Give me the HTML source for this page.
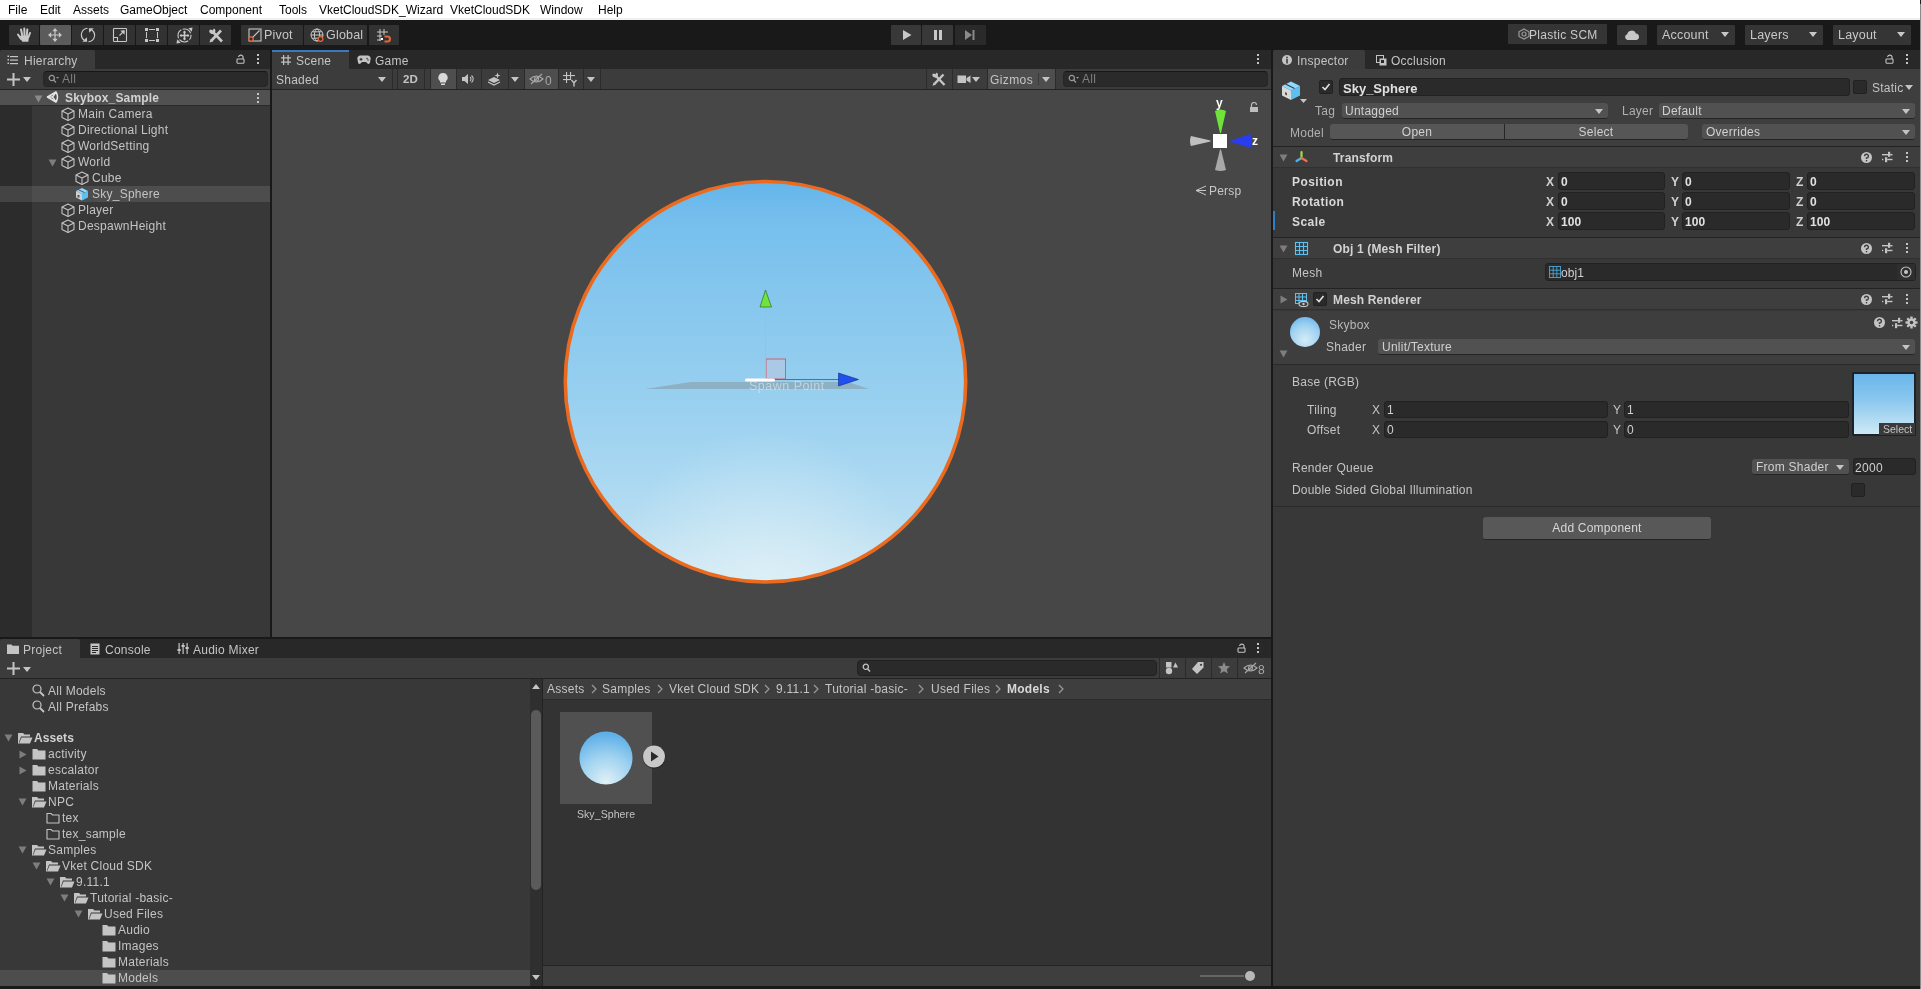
<!DOCTYPE html><html><head><meta charset="utf-8"><style>
html,body{margin:0;padding:0;}
body{width:1921px;height:989px;position:relative;overflow:hidden;background:#191919;font-family:"Liberation Sans",sans-serif;}
div{position:absolute;box-sizing:border-box;}
.t{white-space:nowrap;will-change:transform;}
</style></head><body>
<div style="left:0px;top:0px;width:1921px;height:18px;background:#ffffff;"></div>
<div style="left:0px;top:18px;width:1921px;height:2px;background:#f0f0f0;"></div>
<div class="t" style="left:8px;top:3.84px;font-size:12px;line-height:12px;color:#000;font-weight:normal;letter-spacing:0px;">File</div>
<div class="t" style="left:40px;top:3.84px;font-size:12px;line-height:12px;color:#000;font-weight:normal;letter-spacing:0px;">Edit</div>
<div class="t" style="left:73px;top:3.84px;font-size:12px;line-height:12px;color:#000;font-weight:normal;letter-spacing:0px;">Assets</div>
<div class="t" style="left:120px;top:3.84px;font-size:12px;line-height:12px;color:#000;font-weight:normal;letter-spacing:0px;">GameObject</div>
<div class="t" style="left:200px;top:3.84px;font-size:12px;line-height:12px;color:#000;font-weight:normal;letter-spacing:0px;">Component</div>
<div class="t" style="left:279px;top:3.84px;font-size:12px;line-height:12px;color:#000;font-weight:normal;letter-spacing:0px;">Tools</div>
<div class="t" style="left:319px;top:3.84px;font-size:12px;line-height:12px;color:#000;font-weight:normal;letter-spacing:0px;">VketCloudSDK_Wizard</div>
<div class="t" style="left:450px;top:3.84px;font-size:12px;line-height:12px;color:#000;font-weight:normal;letter-spacing:0px;">VketCloudSDK</div>
<div class="t" style="left:540px;top:3.84px;font-size:12px;line-height:12px;color:#000;font-weight:normal;letter-spacing:0px;">Window</div>
<div class="t" style="left:598px;top:3.84px;font-size:12px;line-height:12px;color:#000;font-weight:normal;letter-spacing:0px;">Help</div>
<div style="left:1920px;top:4px;width:1px;height:985px;background:#8a8a8a;"></div>
<div style="left:1920px;top:0px;width:1px;height:4px;background:#202020;"></div>
<div style="left:0px;top:20px;width:1920px;height:30px;background:#191919;"></div>
<div style="left:9px;top:25px;width:30px;height:20px;background:#323232;border-radius:1px;"></div>
<div style="left:40px;top:25px;width:31px;height:20px;background:#5b5b5b;border-radius:1px;"></div>
<div style="left:72px;top:25px;width:31px;height:20px;background:#323232;border-radius:1px;"></div>
<div style="left:104px;top:25px;width:31px;height:20px;background:#323232;border-radius:1px;"></div>
<div style="left:136px;top:25px;width:31px;height:20px;background:#323232;border-radius:1px;"></div>
<div style="left:168px;top:25px;width:31px;height:20px;background:#323232;border-radius:1px;"></div>
<div style="left:200px;top:25px;width:31px;height:20px;background:#323232;border-radius:1px;"></div>
<svg style="position:absolute;left:16px;top:27px;" width="16" height="16" viewBox="0 0 16 16"><g stroke="#c8c8c8" stroke-width="2" stroke-linecap="round" fill="none"><path d="M2 7.5 L5 12"/><path d="M5 2.5 L6.3 8.5"/><path d="M8.3 1.5 L8.5 8.5"/><path d="M11.3 2.5 L10.8 8.5"/><path d="M14 6 L12.5 10"/></g><path d="M4.5 8.5 H13.2 L12.3 14.8 H6.3 L3.8 10.5Z" fill="#c8c8c8"/></svg>
<svg style="position:absolute;left:47px;top:27px;" width="16" height="16" viewBox="0 0 16 16"><g stroke="#c8c8c8" stroke-width="1.2" fill="none"><path d="M8 3 V13 M3 8 H13"/></g><g fill="#c8c8c8"><path d="M8 1 L5.3 4.2 H10.7Z M8 15 L5.3 11.8 H10.7Z M1 8 L4.2 5.3 V10.7Z M15 8 L11.8 5.3 V10.7Z"/></g></svg>
<svg style="position:absolute;left:80px;top:27px;" width="16" height="16" viewBox="0 0 16 16"><g stroke="#c8c8c8" stroke-width="1.1" fill="none"><path d="M7.5 1.3 A6.5 6.5 0 0 0 4.5 13.3"/><path d="M8.5 14.7 A6.5 6.5 0 0 0 11.5 2.7"/></g><g fill="#c8c8c8"><path d="M2.3 14.8 L7.2 14.8 L6.8 10.2Z"/><path d="M13.7 1.2 L8.8 1.2 L9.2 5.8Z"/></g></svg>
<svg style="position:absolute;left:112px;top:27px;" width="16" height="16" viewBox="0 0 16 16"><g stroke="#c8c8c8" stroke-width="1.1" fill="none"><rect x="1.5" y="1.5" width="13" height="13" rx="0.8"/><path d="M1.5 10.5 H5.5 V14.5"/><path d="M7.5 8.5 L12 4"/></g><path d="M12.8 3.2 L8.3 3.5 L12.5 7.7Z" fill="#c8c8c8"/></svg>
<svg style="position:absolute;left:144px;top:27px;" width="16" height="16" viewBox="0 0 16 16"><g fill="#c8c8c8"><rect x="1" y="1" width="3" height="3"/><rect x="12" y="1" width="3" height="3"/><rect x="1" y="12" width="3" height="3"/><rect x="12" y="12" width="3" height="3"/><rect x="5" y="2" width="6" height="1"/><rect x="5" y="13" width="6" height="1"/><rect x="2" y="5" width="1" height="6"/><rect x="13" y="5" width="1" height="6"/></g></svg>
<svg style="position:absolute;left:176px;top:27px;" width="17" height="17" viewBox="0 0 17 17"><g stroke="#c8c8c8" stroke-width="1.1" fill="none" stroke-dasharray="9.5 1.5" stroke-dashoffset="5"><circle cx="8.5" cy="8.5" r="6.5"/></g><g stroke="#c8c8c8" stroke-width="1.6"><path d="M8.5 4.5 V12.5 M4.5 8.5 H12.5"/></g><g fill="#c8c8c8"><path d="M8.5 3.5 L6.8 5.5 H10.2Z M8.5 13.5 L6.8 11.5 H10.2Z M3.5 8.5 L5.5 6.8 V10.2Z M13.5 8.5 L11.5 6.8 V10.2Z M16.5 0.5 L12.3 1.2 L15.8 4.7Z M0.5 16.5 L4.7 15.8 L1.2 12.3Z"/></g></svg>
<svg style="position:absolute;left:208px;top:27px;" width="17" height="17" viewBox="0 0 17 17"><g stroke="#c8c8c8" stroke-width="2.6" fill="none"><path d="M5 5 L14 14.5"/><path d="M3.5 13.5 L13 3.5"/></g><path d="M1.5 15.5 L2.5 12 L5 14.5Z" fill="#c8c8c8"/><path d="M1.5 3 A3 3 0 1 0 6 1.5 L4.5 3.5 L3 2.5Z" fill="#c8c8c8"/></svg>
<div style="left:241px;top:25px;width:62px;height:20px;background:#323232;border-radius:1px;"></div>
<div style="left:304px;top:25px;width:63px;height:20px;background:#323232;border-radius:1px;"></div>
<div style="left:369px;top:25px;width:30px;height:20px;background:#323232;border-radius:1px;"></div>
<svg style="position:absolute;left:248px;top:28px;" width="14" height="14" viewBox="0 0 14 14"><rect x="1" y="1" width="12" height="12" fill="none" stroke="#c8c8c8" stroke-width="1.1"/><path d="M3.5 10.5 L11.5 2.5" stroke="#c8c8c8" stroke-width="1.1"/><circle cx="3" cy="11" r="2.2" fill="#303030" stroke="#e8673a" stroke-width="1.3"/></svg>
<div class="t" style="left:264px;top:29.42px;font-size:12.5px;line-height:12.5px;color:#c8c8c8;font-weight:normal;letter-spacing:0.2px;">Pivot</div>
<svg style="position:absolute;left:310px;top:28px;" width="14" height="14" viewBox="0 0 14 14"><g fill="none" stroke="#c8c8c8" stroke-width="1"><circle cx="7" cy="7" r="6"/><ellipse cx="7" cy="7" rx="2.6" ry="6"/><path d="M1 7 H13 M2 3.8 H12 M2 10.2 H12"/></g><circle cx="10.5" cy="11" r="2.4" fill="#303030" stroke="#e8673a" stroke-width="1.3"/></svg>
<div class="t" style="left:326px;top:29.42px;font-size:12.5px;line-height:12.5px;color:#c8c8c8;font-weight:normal;letter-spacing:0.2px;">Global</div>
<svg style="position:absolute;left:376px;top:28px;" width="16" height="16" viewBox="0 0 16 16"><g stroke="#c8c8c8" stroke-width="1"><path d="M4 1 V13 M8 1 V7 M1 4 H12 M1 8 H6 M1 12 H5"/></g><rect x="5" y="10" width="2" height="2" fill="#fff"/><path d="M8.5 8.5 H11.5 A2.5 2.5 0 0 1 11.5 13.5 H8.5" fill="none" stroke="#e8673a" stroke-width="2"/></svg>
<div style="left:891px;top:25px;width:30px;height:20px;background:#383838;border-radius:1px;"></div>
<div style="left:922px;top:25px;width:31px;height:20px;background:#383838;border-radius:1px;"></div>
<div style="left:955px;top:25px;width:31px;height:20px;background:#2a2a2a;border-radius:1px;"></div>
<svg style="position:absolute;left:901px;top:29px;" width="12" height="12" viewBox="0 0 12 12"><path d="M2 1 L10.5 6 L2 11Z" fill="#c8c8c8"/></svg>
<svg style="position:absolute;left:932px;top:29px;" width="12" height="12" viewBox="0 0 12 12"><rect x="2" y="1" width="3" height="10" fill="#c8c8c8"/><rect x="7" y="1" width="3" height="10" fill="#c8c8c8"/></svg>
<svg style="position:absolute;left:964px;top:29px;" width="12" height="12" viewBox="0 0 12 12"><path d="M1 1 L8 6 L1 11Z" fill="#8a8a8a"/><rect x="8.5" y="1" width="2" height="10" fill="#8a8a8a"/></svg>
<div style="left:1508px;top:24px;width:99px;height:20px;background:#353535;border-radius:1px;"></div>
<svg style="position:absolute;left:1518px;top:28px;" width="12" height="12" viewBox="0 0 12 12"><g fill="none" stroke="#9a9a9a" stroke-width="1.2"><path d="M6 1 L11 3.8 V8.5 L6 11 L1 8.5 V3.8Z"/><circle cx="6" cy="6" r="2"/></g></svg>
<div class="t" style="left:1529px;top:28.84px;font-size:12px;line-height:12px;color:#c8c8c8;font-weight:normal;letter-spacing:0.3px;">Plastic SCM</div>
<div style="left:1617px;top:25px;width:30px;height:20px;background:#353535;border-radius:1px;"></div>
<svg style="position:absolute;left:1624px;top:29px;" width="16" height="12" viewBox="0 0 16 12"><path d="M3.5 11 A3 3 0 0 1 3.2 5.2 A4.5 4.5 0 0 1 11.8 4.5 A3.3 3.3 0 0 1 12.5 11Z" fill="#c8c8c8"/></svg>
<div style="left:1657px;top:25px;width:78px;height:20px;background:#353535;border-radius:1px;"></div>
<div class="t" style="left:1662px;top:29.42px;font-size:12.5px;line-height:12.5px;color:#c8c8c8;font-weight:normal;letter-spacing:0.2px;">Account</div>
<svg style="position:absolute;left:1721px;top:32px;" width="9" height="6" viewBox="0 0 9 6"><path d="M0 0 H8 L4 5Z" fill="#c8c8c8"/></svg>
<div style="left:1745px;top:25px;width:78px;height:20px;background:#353535;border-radius:1px;"></div>
<div class="t" style="left:1750px;top:29.42px;font-size:12.5px;line-height:12.5px;color:#c8c8c8;font-weight:normal;letter-spacing:0.2px;">Layers</div>
<svg style="position:absolute;left:1809px;top:32px;" width="9" height="6" viewBox="0 0 9 6"><path d="M0 0 H8 L4 5Z" fill="#c8c8c8"/></svg>
<div style="left:1833px;top:25px;width:78px;height:20px;background:#353535;border-radius:1px;"></div>
<div class="t" style="left:1838px;top:29.42px;font-size:12.5px;line-height:12.5px;color:#c8c8c8;font-weight:normal;letter-spacing:0.2px;">Layout</div>
<svg style="position:absolute;left:1897px;top:32px;" width="9" height="6" viewBox="0 0 9 6"><path d="M0 0 H8 L4 5Z" fill="#c8c8c8"/></svg>
<div style="left:0px;top:50px;width:270px;height:19px;background:#282828;"></div>
<div style="left:0px;top:50px;width:95px;height:19px;background:#3c3c3c;border-radius:2px 2px 0 0;"></div>
<svg style="position:absolute;left:7px;top:55px;" width="12" height="10" viewBox="0 0 12 10"><g fill="#c4c4c4"><rect x="3" y="1" width="8" height="1.2"/><rect x="3" y="4.5" width="8" height="1.2"/><rect x="3" y="8" width="8" height="1.2"/><rect x="0.5" y="0.5" width="1.5" height="1.5"/><rect x="0.5" y="4" width="1.5" height="1.5"/><rect x="0.5" y="7.5" width="1.5" height="1.5"/></g></svg>
<div class="t" style="left:23.5px;top:54.84px;font-size:12px;line-height:12px;color:#c4c4c4;font-weight:normal;letter-spacing:0.25px;">Hierarchy</div>
<svg style="position:absolute;left:235px;top:52px;" width="11" height="12" viewBox="0 0 11 12"><g fill="none" stroke="#c4c4c4" stroke-width="1.1"><rect x="2" y="7" width="7" height="4.2" rx="0.6"/><path d="M3.5 5 A2.4 2.4 0 0 1 8 4.5 V7"/></g></svg>
<svg style="position:absolute;left:256px;top:54px;" width="4" height="11" viewBox="0 0 4 11"><g fill="#c4c4c4"><rect x="1" y="0" width="2" height="2"/><rect x="1" y="4" width="2" height="2"/><rect x="1" y="8" width="2" height="2"/></g></svg>
<div style="left:0px;top:69px;width:270px;height:20px;background:#3c3c3c;"></div>
<svg style="position:absolute;left:7px;top:73px;" width="13" height="13" viewBox="0 0 13 13"><g fill="#c4c4c4"><rect x="5.5" y="0" width="2" height="13"/><rect x="0" y="5.5" width="13" height="2"/></g></svg>
<svg style="position:absolute;left:23px;top:77px;" width="8" height="5" viewBox="0 0 8 5"><path d="M0 0 H8 L4.0 5Z" fill="#c4c4c4"/></svg>
<div style="left:43px;top:71px;width:225px;height:16px;background:#2a2a2a;border-radius:4px;border:1px solid #262626;border-top-color:#171717;"></div>
<svg style="position:absolute;left:48px;top:74px;" width="12" height="10" viewBox="0 0 12 10"><g fill="none" stroke="#9a9a9a" stroke-width="1.2"><circle cx="3.8" cy="4" r="2.6"/><path d="M5.6 6 L8 8.5"/></g><path d="M8 3 H11 L9.5 4.8Z" fill="#9a9a9a"/></svg>
<div class="t" style="left:62px;top:72.84px;font-size:12px;line-height:12px;color:#7f7f7f;font-weight:normal;letter-spacing:0.25px;">All</div>
<div style="left:0px;top:89px;width:270px;height:1px;background:#232323;"></div>
<div style="left:0px;top:90px;width:270px;height:547px;background:#383838;"></div>
<div style="left:0px;top:106px;width:32px;height:531px;background:#2c2c2c;"></div>
<div style="left:0px;top:90px;width:270px;height:15px;background:#515151;"></div>
<div style="left:0px;top:105px;width:270px;height:1px;background:#2a2a2a;"></div>
<svg style="position:absolute;left:34px;top:95px;" width="9" height="8" viewBox="0 0 9 8"><path d="M0.5 0.5 H8.5 L4.5 7.5Z" fill="#8a8a8a"/></svg>
<svg style="position:absolute;left:46px;top:90px;" width="14" height="14" viewBox="0 0 14 14"><g fill="none" stroke="#e8e8e8" stroke-width="1.5" stroke-linejoin="round"><path d="M1.5 7 L10 2 Q13 7 10 12 Z"/><path d="M1.5 7 H6.5 L10 2 M6.5 7 L10 12"/></g></svg>
<div class="t" style="left:65px;top:91.84px;font-size:12px;line-height:12px;color:#d2d2d2;font-weight:bold;letter-spacing:0.15px;">Skybox_Sample</div>
<svg style="position:absolute;left:256px;top:93px;" width="4" height="11" viewBox="0 0 4 11"><g fill="#c4c4c4"><rect x="1" y="0" width="2" height="2"/><rect x="1" y="4" width="2" height="2"/><rect x="1" y="8" width="2" height="2"/></g></svg>
<div style="left:0px;top:186px;width:32px;height:16px;background:#444444;"></div>
<div style="left:32px;top:186px;width:238px;height:16px;background:#4d4d4d;"></div>
<svg style="position:absolute;left:61px;top:107px;" width="14" height="14" viewBox="0 0 14 14"><g fill="none" stroke="#c4c4c4" stroke-width="1.1" stroke-linejoin="round"><path d="M7 1 L13 4 V10.5 L7 13.5 L1 10.5 V4Z"/><path d="M1 4 L7 7 L13 4 M7 7 V13.5"/></g></svg>
<div class="t" style="left:78px;top:107.59px;font-size:12px;line-height:12px;color:#c4c4c4;font-weight:normal;letter-spacing:0.25px;">Main Camera</div>
<svg style="position:absolute;left:61px;top:123px;" width="14" height="14" viewBox="0 0 14 14"><g fill="none" stroke="#c4c4c4" stroke-width="1.1" stroke-linejoin="round"><path d="M7 1 L13 4 V10.5 L7 13.5 L1 10.5 V4Z"/><path d="M1 4 L7 7 L13 4 M7 7 V13.5"/></g></svg>
<div class="t" style="left:78px;top:123.59px;font-size:12px;line-height:12px;color:#c4c4c4;font-weight:normal;letter-spacing:0.25px;">Directional Light</div>
<svg style="position:absolute;left:61px;top:139px;" width="14" height="14" viewBox="0 0 14 14"><g fill="none" stroke="#c4c4c4" stroke-width="1.1" stroke-linejoin="round"><path d="M7 1 L13 4 V10.5 L7 13.5 L1 10.5 V4Z"/><path d="M1 4 L7 7 L13 4 M7 7 V13.5"/></g></svg>
<div class="t" style="left:78px;top:139.59px;font-size:12px;line-height:12px;color:#c4c4c4;font-weight:normal;letter-spacing:0.25px;">WorldSetting</div>
<svg style="position:absolute;left:48px;top:159px;" width="9" height="8" viewBox="0 0 9 8"><path d="M0.5 0.5 H8.5 L4.5 7.5Z" fill="#7d7d7d"/></svg>
<svg style="position:absolute;left:61px;top:155px;" width="14" height="14" viewBox="0 0 14 14"><g fill="none" stroke="#c4c4c4" stroke-width="1.1" stroke-linejoin="round"><path d="M7 1 L13 4 V10.5 L7 13.5 L1 10.5 V4Z"/><path d="M1 4 L7 7 L13 4 M7 7 V13.5"/></g></svg>
<div class="t" style="left:78px;top:155.59px;font-size:12px;line-height:12px;color:#c4c4c4;font-weight:normal;letter-spacing:0.25px;">World</div>
<svg style="position:absolute;left:75px;top:171px;" width="14" height="14" viewBox="0 0 14 14"><g fill="none" stroke="#c4c4c4" stroke-width="1.1" stroke-linejoin="round"><path d="M7 1 L13 4 V10.5 L7 13.5 L1 10.5 V4Z"/><path d="M1 4 L7 7 L13 4 M7 7 V13.5"/></g></svg>
<div class="t" style="left:92px;top:171.59px;font-size:12px;line-height:12px;color:#c4c4c4;font-weight:normal;letter-spacing:0.25px;">Cube</div>
<svg style="position:absolute;left:75px;top:187px;" width="14" height="14" viewBox="0 0 14 14"><path d="M1 4 L7 7 V13.5 L1 10.5Z" fill="#d0d0d0"/><path d="M7 7 L13 4 V10.5 L7 13.5Z" fill="#5cc0f0"/><path d="M1 4 L7 1 L13 4 L7 7Z" fill="#8fd8ff"/><path d="M3.5 2.8 L9.5 5.6" stroke="#3a3a3a" stroke-width="0.8"/><rect x="2.5" y="8" width="2" height="2.5" fill="#555"/></svg>
<div class="t" style="left:92px;top:187.59px;font-size:12px;line-height:12px;color:#c4c4c4;font-weight:normal;letter-spacing:0.25px;">Sky_Sphere</div>
<svg style="position:absolute;left:61px;top:203px;" width="14" height="14" viewBox="0 0 14 14"><g fill="none" stroke="#c4c4c4" stroke-width="1.1" stroke-linejoin="round"><path d="M7 1 L13 4 V10.5 L7 13.5 L1 10.5 V4Z"/><path d="M1 4 L7 7 L13 4 M7 7 V13.5"/></g></svg>
<div class="t" style="left:78px;top:203.59px;font-size:12px;line-height:12px;color:#c4c4c4;font-weight:normal;letter-spacing:0.25px;">Player</div>
<svg style="position:absolute;left:61px;top:219px;" width="14" height="14" viewBox="0 0 14 14"><g fill="none" stroke="#c4c4c4" stroke-width="1.1" stroke-linejoin="round"><path d="M7 1 L13 4 V10.5 L7 13.5 L1 10.5 V4Z"/><path d="M1 4 L7 7 L13 4 M7 7 V13.5"/></g></svg>
<div class="t" style="left:78px;top:219.59px;font-size:12px;line-height:12px;color:#c4c4c4;font-weight:normal;letter-spacing:0.25px;">DespawnHeight</div>
<div style="left:272px;top:50px;width:999px;height:19px;background:#282828;"></div>
<div style="left:272px;top:50px;width:77px;height:19px;background:#3c3c3c;border-radius:2px 2px 0 0;"></div>
<div style="left:272px;top:50px;width:77px;height:2px;background:#3a79bb;"></div>
<svg style="position:absolute;left:281px;top:55px;" width="10" height="10" viewBox="0 0 10 10"><g fill="#c4c4c4"><rect x="2" y="0" width="1.2" height="10"/><rect x="6.5" y="0" width="1.2" height="10"/><rect x="0" y="2.3" width="10" height="1.2"/><rect x="0" y="6.5" width="10" height="1.2"/></g></svg>
<div class="t" style="left:296px;top:54.84px;font-size:12px;line-height:12px;color:#c4c4c4;font-weight:normal;letter-spacing:0.25px;">Scene</div>
<svg style="position:absolute;left:357px;top:55px;" width="14" height="9" viewBox="0 0 14 9"><path d="M3 0.5 H11 A3 3 0 0 1 13.5 4.5 L13 7.5 A1.5 1.5 0 0 1 10.5 8.5 L9 7 H5 L3.5 8.5 A1.5 1.5 0 0 1 1 7.5 L0.5 4.5 A3 3 0 0 1 3 0.5Z" fill="#c4c4c4"/><g fill="#282828"><rect x="2.5" y="3.8" width="3" height="1"/><rect x="3.5" y="2.8" width="1" height="3"/><circle cx="10" cy="3.5" r="0.7"/><circle cx="11" cy="5" r="0.7"/></g></svg>
<div class="t" style="left:375px;top:54.84px;font-size:12px;line-height:12px;color:#c4c4c4;font-weight:normal;letter-spacing:0.25px;">Game</div>
<svg style="position:absolute;left:1256px;top:54px;" width="4" height="11" viewBox="0 0 4 11"><g fill="#c4c4c4"><rect x="1" y="0" width="2" height="2"/><rect x="1" y="4" width="2" height="2"/><rect x="1" y="8" width="2" height="2"/></g></svg>
<div style="left:272px;top:69px;width:999px;height:20px;background:#3c3c3c;"></div>
<div class="t" style="left:276px;top:73.84px;font-size:12px;line-height:12px;color:#c4c4c4;font-weight:normal;letter-spacing:0.25px;">Shaded</div>
<svg style="position:absolute;left:378px;top:77px;" width="8" height="5" viewBox="0 0 8 5"><path d="M0 0 H8 L4.0 5Z" fill="#c4c4c4"/></svg>
<div style="left:392px;top:69px;width:1px;height:20px;background:#2b2b2b;"></div>
<div style="left:397px;top:69px;width:1px;height:20px;background:#2b2b2b;"></div>
<div class="t" style="left:403px;top:74.27px;font-size:11.5px;line-height:11.5px;color:#c4c4c4;font-weight:bold;letter-spacing:0px;">2D</div>
<div style="left:424px;top:69px;width:1px;height:20px;background:#2b2b2b;"></div>
<div style="left:430px;top:69px;width:1px;height:20px;background:#2b2b2b;"></div>
<div style="left:431px;top:69px;width:25px;height:20px;background:#4e4e4e;"></div>
<svg style="position:absolute;left:437px;top:72px;" width="12" height="14" viewBox="0 0 12 14"><path d="M6 1 A4.5 4.5 0 0 1 9 9 V10.5 H3 V9 A4.5 4.5 0 0 1 6 1Z" fill="#d8d8d8"/><rect x="4" y="11.5" width="4" height="1.5" fill="#d8d8d8"/></svg>
<div style="left:456px;top:69px;width:1px;height:20px;background:#2b2b2b;"></div>
<svg style="position:absolute;left:461px;top:73px;" width="14" height="12" viewBox="0 0 14 12"><path d="M1 4 H3.5 L7 1 V11 L3.5 8 H1Z" fill="#c4c4c4"/><path d="M9 4 A2.5 2.5 0 0 1 9 8 M10.5 2.5 A4.5 4.5 0 0 1 10.5 9.5" fill="none" stroke="#c4c4c4" stroke-width="1.1"/></svg>
<div style="left:481px;top:69px;width:1px;height:20px;background:#2b2b2b;"></div>
<svg style="position:absolute;left:487px;top:72px;" width="14" height="14" viewBox="0 0 14 14"><path d="M1 8 L7 5 L13 8 L7 11Z" fill="#c4c4c4"/><path d="M1 10 L7 13 L13 10" fill="none" stroke="#c4c4c4" stroke-width="1.2"/><path d="M10.5 0.5 L11.3 2.7 L13.5 3.5 L11.3 4.3 L10.5 6.5 L9.7 4.3 L7.5 3.5 L9.7 2.7Z" fill="#c4c4c4"/></svg>
<div style="left:508px;top:69px;width:1px;height:20px;background:#2b2b2b;"></div>
<svg style="position:absolute;left:511px;top:77px;" width="8" height="5" viewBox="0 0 8 5"><path d="M0 0 H8 L4.0 5Z" fill="#c4c4c4"/></svg>
<div style="left:524px;top:69px;width:1px;height:20px;background:#2b2b2b;"></div>
<div style="left:525px;top:69px;width:33px;height:20px;background:#4e4e4e;"></div>
<svg style="position:absolute;left:529px;top:73px;" width="15" height="12" viewBox="0 0 15 12"><g fill="none" stroke="#a8a8a8" stroke-width="1.1"><path d="M1 6 Q7.5 0 14 6 Q7.5 12 1 6Z"/><circle cx="7.5" cy="6" r="2"/><path d="M2 11 L13 1"/></g></svg>
<div class="t" style="left:545px;top:74.84px;font-size:12px;line-height:12px;color:#a8a8a8;font-weight:normal;letter-spacing:0.25px;">0</div>
<div style="left:558px;top:69px;width:1px;height:20px;background:#2b2b2b;"></div>
<svg style="position:absolute;left:563px;top:72px;" width="16" height="15" viewBox="0 0 16 15"><g fill="#c4c4c4"><rect x="3" y="0" width="1.1" height="11"/><rect x="7" y="0" width="1.1" height="8"/><rect x="0" y="3" width="12" height="1.1"/><rect x="0" y="7" width="7" height="1.1"/></g><path d="M8.5 8 L11 11 L13.5 8 M11 11 V14.5" fill="none" stroke="#c4c4c4" stroke-width="1.4"/></svg>
<div style="left:583px;top:69px;width:1px;height:20px;background:#2b2b2b;"></div>
<svg style="position:absolute;left:587px;top:77px;" width="8" height="5" viewBox="0 0 8 5"><path d="M0 0 H8 L4.0 5Z" fill="#c4c4c4"/></svg>
<div style="left:600px;top:69px;width:1px;height:20px;background:#2b2b2b;"></div>
<div style="left:926px;top:69px;width:1px;height:20px;background:#2b2b2b;"></div>
<svg style="position:absolute;left:931px;top:71px;" width="16" height="16" viewBox="0 0 16 16"><g stroke="#c4c4c4" stroke-width="2.4" fill="none"><path d="M5 5 L13.5 14"/><path d="M3.5 12.8 L12.5 3.5"/></g><path d="M1.5 14.8 L2.5 11.5 L4.8 13.8Z" fill="#c4c4c4"/><path d="M1.5 3 A2.8 2.8 0 1 0 5.8 1.5 L4.3 3.3 L3 2.4Z" fill="#c4c4c4"/></svg>
<div style="left:952px;top:69px;width:1px;height:20px;background:#2b2b2b;"></div>
<svg style="position:absolute;left:957px;top:74px;" width="14" height="10" viewBox="0 0 14 10"><rect x="0.5" y="1.5" width="8.5" height="7.5" fill="#c4c4c4"/><path d="M9.5 4 L13.5 1.5 V9 L9.5 6.5Z" fill="#c4c4c4"/></svg>
<svg style="position:absolute;left:972px;top:77px;" width="8" height="5" viewBox="0 0 8 5"><path d="M0 0 H8 L4.0 5Z" fill="#c4c4c4"/></svg>
<div style="left:987px;top:69px;width:1px;height:20px;background:#2b2b2b;"></div>
<div style="left:988px;top:69px;width:67px;height:20px;background:#4e4e4e;"></div>
<div class="t" style="left:990px;top:73.84px;font-size:12px;line-height:12px;color:#c4c4c4;font-weight:normal;letter-spacing:0.4px;">Gizmos</div>
<div style="left:1038px;top:73px;width:1px;height:12px;background:#3a3a3a;"></div>
<svg style="position:absolute;left:1042px;top:77px;" width="8" height="5" viewBox="0 0 8 5"><path d="M0 0 H8 L4.0 5Z" fill="#c4c4c4"/></svg>
<div style="left:1055px;top:69px;width:1px;height:20px;background:#2b2b2b;"></div>
<div style="left:1063px;top:71px;width:205px;height:16px;background:#2a2a2a;border-radius:4px;border:1px solid #262626;border-top-color:#171717;"></div>
<svg style="position:absolute;left:1068px;top:74px;" width="12" height="10" viewBox="0 0 12 10"><g fill="none" stroke="#9a9a9a" stroke-width="1.2"><circle cx="3.8" cy="4" r="2.6"/><path d="M5.6 6 L8 8.5"/></g><path d="M8 3 H11 L9.5 4.8Z" fill="#9a9a9a"/></svg>
<div class="t" style="left:1082px;top:72.84px;font-size:12px;line-height:12px;color:#7f7f7f;font-weight:normal;letter-spacing:0.25px;">All</div>
<div style="left:272px;top:89px;width:999px;height:1px;background:#232323;"></div>
<div style="left:272px;top:90px;width:999px;height:547px;background:#474747;"></div>
<svg style="position:absolute;left:0;top:0" width="1921" height="989" viewBox="0 0 1921 989">
<defs>
<linearGradient id="sky" x1="0" y1="0" x2="0" y2="1">
<stop offset="0" stop-color="#64b5eb"/>
<stop offset="0.1" stop-color="#76bfed"/>
<stop offset="0.3" stop-color="#87c7ee"/>
<stop offset="0.5" stop-color="#95ceef"/>
<stop offset="0.7" stop-color="#a6d6f1"/>
<stop offset="0.85" stop-color="#b6ddf1"/>
<stop offset="1" stop-color="#cfe8f3"/>
</linearGradient>
<radialGradient id="glow" cx="0.5" cy="1" r="0.38">
<stop offset="0" stop-color="#e2f2f8" stop-opacity="0.7"/>
<stop offset="1" stop-color="#e2f2f8" stop-opacity="0"/>
</radialGradient>
</defs>
<circle cx="765.5" cy="381.75" r="200" fill="url(#sky)"/>
<circle cx="765.5" cy="381.75" r="200" fill="url(#glow)"/>
<circle cx="765.5" cy="381.75" r="200.2" fill="none" stroke="#ec6a1e" stroke-width="3.6"/>
<!-- ground plane of spawn point -->
<path d="M691 382 L848 382 L869 389 L645 389Z" fill="#8aa6b6" fill-opacity="0.75"/>
<!-- red square -->
<rect x="766" y="359" width="19.5" height="20" fill="#b9c6e0" fill-opacity="0.6" stroke="#d0606a" stroke-width="1"/>
<!-- green axis -->
<line x1="765.5" y1="307" x2="765.5" y2="379" stroke="#80e080" stroke-width="1"/>
<path d="M765.5 290 L760 307 L771.5 307Z" fill="#6ee43c" stroke="#2a5a18" stroke-width="0.6"/>
<!-- blue axis -->
<line x1="766" y1="379.5" x2="839" y2="379.5" stroke="#3d6fe0" stroke-width="1.2"/>
<path d="M858.5 379.5 L838.5 373 L838.5 386Z" fill="#2050f0" stroke="#102a80" stroke-width="0.6"/>
<!-- white bar -->
<rect x="745" y="378.5" width="30" height="3" rx="1.5" fill="#ffffff"/>
</svg>
<div class="t" style="left:748.5px;top:379.92px;font-size:12.5px;line-height:12.5px;color:rgba(225,235,242,0.6);font-weight:normal;letter-spacing:0.5px;">Spawn Point</div>
<svg style="position:absolute;left:1180;top:95px;left:1180px" width="90" height="110" viewBox="1180 95 90 110">
<path d="M1215 111 Q1220.5 108 1226 111 L1221 133 L1220 133Z" fill="#6fe33a"/>
<path d="M1250.5 134 Q1253 141 1250.5 148 L1230 141.5 L1230 140.5Z" fill="#2a3cf0"/>
<path d="M1191 136 Q1189 141 1191 146 L1210.5 141.5 L1210.5 140.5Z" fill="#c0c0c0"/>
<path d="M1215 170 Q1220.5 172 1226 170 L1221 149.5 L1220 149.5Z" fill="#a8a8a8"/>
<rect x="1213" y="134" width="14" height="14" fill="#ffffff"/>
</svg>
<div class="t" style="left:1215.5px;top:96.84px;font-size:12px;line-height:12px;color:#ffffff;font-weight:bold;letter-spacing:0px;">y</div>
<div class="t" style="left:1251.5px;top:134.84px;font-size:12px;line-height:12px;color:#ffffff;font-weight:bold;letter-spacing:0px;">z</div>
<svg style="position:absolute;left:1249px;top:102px;" width="10" height="10" viewBox="0 0 10 10"><g fill="#bdbdbd"><rect x="1" y="5" width="8" height="5"/></g><path d="M2.5 5 V3 A2.5 2.5 0 0 1 7.5 3" fill="none" stroke="#bdbdbd" stroke-width="1.2"/></svg>
<svg style="position:absolute;left:1195px;top:185px;" width="12" height="11" viewBox="0 0 12 11"><g fill="none" stroke="#c8c8c8" stroke-width="1"><path d="M11 1 L1 5.5 L11 10 M1 5.5 H11"/></g></svg>
<div class="t" style="left:1209px;top:185.34px;font-size:12px;line-height:12px;color:#c8c8c8;font-weight:normal;letter-spacing:0.2px;">Persp</div>
<div style="left:1273px;top:50px;width:647px;height:19px;background:#282828;"></div>
<div style="left:1273px;top:50px;width:92px;height:19px;background:#3c3c3c;border-radius:2px 2px 0 0;"></div>
<svg style="position:absolute;left:1282px;top:55px;" width="10" height="10" viewBox="0 0 10 10"><circle cx="5" cy="5" r="5" fill="#c4c4c4"/><rect x="4.2" y="4" width="1.6" height="4.5" fill="#3c3c3c"/><rect x="4.2" y="1.7" width="1.6" height="1.6" fill="#3c3c3c"/></svg>
<div class="t" style="left:1297px;top:54.84px;font-size:12px;line-height:12px;color:#c4c4c4;font-weight:normal;letter-spacing:0.25px;">Inspector</div>
<svg style="position:absolute;left:1376px;top:55px;" width="11" height="11" viewBox="0 0 11 11"><rect x="0.5" y="0.5" width="7" height="7" fill="none" stroke="#c4c4c4" stroke-width="1"/><rect x="3.5" y="3.5" width="7" height="7" fill="#c4c4c4"/><rect x="5" y="5" width="3" height="3" fill="#282828"/></svg>
<div class="t" style="left:1391px;top:54.84px;font-size:12px;line-height:12px;color:#c4c4c4;font-weight:normal;letter-spacing:0.25px;">Occlusion</div>
<svg style="position:absolute;left:1884px;top:52px;" width="11" height="12" viewBox="0 0 11 12"><g fill="none" stroke="#c4c4c4" stroke-width="1.1"><rect x="2" y="7" width="7" height="4.2" rx="0.6"/><path d="M3.5 5 A2.4 2.4 0 0 1 8 4.5 V7"/></g></svg>
<svg style="position:absolute;left:1905px;top:54px;" width="4" height="11" viewBox="0 0 4 11"><g fill="#c4c4c4"><rect x="1" y="0" width="2" height="2"/><rect x="1" y="4" width="2" height="2"/><rect x="1" y="8" width="2" height="2"/></g></svg>
<div style="left:1273px;top:69px;width:647px;height:917px;background:#383838;"></div>
<div style="left:1273px;top:69px;width:647px;height:77px;background:#3e3e3e;"></div>
<svg style="position:absolute;left:1280px;top:79px;" width="22" height="22" viewBox="0 0 22 22"><path d="M2 7 L11 11.5 V21 L2 16.5Z" fill="#d8d8d8"/><path d="M11 11.5 L20 7 V16.5 L11 21Z" fill="#5cc0f0"/><path d="M2 7 L11 2.5 L20 7 L11 11.5Z" fill="#8fd8ff"/><path d="M5.5 5 L14.5 9.5" stroke="#3e3e3e" stroke-width="1.2"/><path d="M5 13 V15.5 L7 16.5 V14Z" fill="#555"/></svg>
<svg style="position:absolute;left:1300px;top:99px;" width="7" height="4" viewBox="0 0 7 4"><path d="M0 0 H7 L3.5 4Z" fill="#c4c4c4"/></svg>
<div style="left:1319px;top:80px;width:14px;height:14px;background:#2a2a2a;border-radius:2px;border:1px solid #212121;"></div>
<svg style="position:absolute;left:1321px;top:82px;" width="10" height="10" viewBox="0 0 10 10"><path d="M1.5 5 L4 7.5 L8.5 2" fill="none" stroke="#e0e0e0" stroke-width="1.6"/></svg>
<div style="left:1339px;top:78px;width:511px;height:18px;background:#2a2a2a;border-radius:3px;border:1px solid #212121;"></div>
<div class="t" style="left:1343px;top:81.50px;font-size:13px;line-height:13px;color:#e0e0e0;font-weight:bold;letter-spacing:0px;">Sky_Sphere</div>
<div style="left:1853px;top:80px;width:14px;height:14px;background:#2a2a2a;border-radius:2px;border:1px solid #212121;"></div>
<div class="t" style="left:1871.5px;top:81.84px;font-size:12px;line-height:12px;color:#c4c4c4;font-weight:normal;letter-spacing:0.25px;">Static</div>
<svg style="position:absolute;left:1905px;top:85px;" width="8" height="5" viewBox="0 0 8 5"><path d="M0 0 H8 L4.0 5Z" fill="#c4c4c4"/></svg>
<div class="t" style="left:1315px;top:105.34px;font-size:12px;line-height:12px;color:#b0b0b0;font-weight:normal;letter-spacing:0.25px;">Tag</div>
<div style="left:1342px;top:103px;width:266px;height:16px;background:#515151;border-radius:3px;border-bottom:1px solid #242424;"></div>
<div class="t" style="left:1345px;top:105.34px;font-size:12px;line-height:12px;color:#d0d0d0;font-weight:normal;letter-spacing:0.25px;">Untagged</div>
<svg style="position:absolute;left:1595px;top:109px;" width="8" height="5" viewBox="0 0 8 5"><path d="M0 0 H8 L4.0 5Z" fill="#c4c4c4"/></svg>
<div class="t" style="left:1622px;top:105.34px;font-size:12px;line-height:12px;color:#b0b0b0;font-weight:normal;letter-spacing:0.25px;">Layer</div>
<div style="left:1659px;top:103px;width:256px;height:16px;background:#515151;border-radius:3px;border-bottom:1px solid #242424;"></div>
<div class="t" style="left:1662px;top:105.34px;font-size:12px;line-height:12px;color:#d0d0d0;font-weight:normal;letter-spacing:0.25px;">Default</div>
<svg style="position:absolute;left:1902px;top:109px;" width="8" height="5" viewBox="0 0 8 5"><path d="M0 0 H8 L4.0 5Z" fill="#c4c4c4"/></svg>
<div class="t" style="left:1290px;top:126.84px;font-size:12px;line-height:12px;color:#b0b0b0;font-weight:normal;letter-spacing:0.25px;">Model</div>
<div style="left:1330px;top:124px;width:175px;height:16px;background:#565656;border-radius:3px 0 0 3px;border-bottom:1px solid #242424;"></div>
<div style="left:1504px;top:124px;width:184px;height:16px;background:#565656;border-radius:0 3px 3px 0;border-bottom:1px solid #242424;border-left:1px solid #262626;"></div>
<div class="t" style="left:1117px;width:600px;text-align:center;top:125.84px;font-size:12px;line-height:12px;color:#d0d0d0;font-weight:normal;letter-spacing:0.25px;">Open</div>
<div class="t" style="left:1296px;width:600px;text-align:center;top:125.84px;font-size:12px;line-height:12px;color:#d0d0d0;font-weight:normal;letter-spacing:0.25px;">Select</div>
<div style="left:1702px;top:124px;width:213px;height:16px;background:#515151;border-radius:3px;border-bottom:1px solid #242424;"></div>
<div class="t" style="left:1706px;top:126.34px;font-size:12px;line-height:12px;color:#d0d0d0;font-weight:normal;letter-spacing:0.25px;">Overrides</div>
<svg style="position:absolute;left:1902px;top:130px;" width="8" height="5" viewBox="0 0 8 5"><path d="M0 0 H8 L4.0 5Z" fill="#c4c4c4"/></svg>
<div style="left:1273px;top:146px;width:647px;height:1px;background:#232323;"></div>
<div style="left:1273px;top:147px;width:647px;height:20px;background:#3e3e3e;"></div>
<div style="left:1273px;top:167px;width:647px;height:1px;background:#303030;"></div>
<svg style="position:absolute;left:1279px;top:154px;" width="9" height="8" viewBox="0 0 9 8"><path d="M0.5 0.5 H8.5 L4.5 7.5Z" fill="#7d7d7d"/></svg>
<svg style="position:absolute;left:1294px;top:150px;" width="15" height="15" viewBox="0 0 15 15"><g stroke-width="2.2" stroke-linecap="round"><path d="M7.5 8 V2" stroke="#a0e040"/><path d="M7.5 8 L2.5 11" stroke="#4fb2f0"/><path d="M7.5 8 L12.5 11" stroke="#f07050"/></g></svg>
<div class="t" style="left:1333px;top:151.84px;font-size:12px;line-height:12px;color:#d2d2d2;font-weight:bold;letter-spacing:0.15px;">Transform</div>
<svg style="position:absolute;left:1861px;top:152px;" width="11" height="11" viewBox="0 0 11 11"><circle cx="5.5" cy="5.5" r="5.5" fill="#c4c4c4"/><path d="M3.6 4.2 A1.9 1.9 0 1 1 5.5 6 V7" fill="none" stroke="#3e3e3e" stroke-width="1.4"/><rect x="4.8" y="8" width="1.4" height="1.4" fill="#3e3e3e"/></svg>
<svg style="position:absolute;left:1880px;top:151px;" width="13" height="12" viewBox="0 0 13 12"><g fill="#c4c4c4"><rect x="2" y="3" width="6" height="1.4"/><rect x="8" y="0.8" width="2.2" height="5"/><rect x="10.2" y="3" width="2.3" height="1.4"/><rect x="2" y="7.8" width="1.3" height="1.4"/><rect x="5" y="6.2" width="2.2" height="5"/><rect x="7.2" y="7.8" width="5.3" height="1.4"/></g></svg>
<svg style="position:absolute;left:1905px;top:152px;" width="4" height="11" viewBox="0 0 4 11"><g fill="#c4c4c4"><rect x="1" y="0" width="2" height="2"/><rect x="1" y="4" width="2" height="2"/><rect x="1" y="8" width="2" height="2"/></g></svg>
<div class="t" style="left:1292px;top:175.84px;font-size:12px;line-height:12px;color:#d8d8d8;font-weight:bold;letter-spacing:0.45px;">Position</div>
<div class="t" style="left:1546px;top:175.84px;font-size:12px;line-height:12px;color:#d0d0d0;font-weight:bold;letter-spacing:0px;">X</div>
<div style="left:1558px;top:172px;width:107px;height:18px;background:#2a2a2a;border-radius:3px;border:1px solid #212121;"></div>
<div class="t" style="left:1561px;top:175.84px;font-size:12px;line-height:12px;color:#e0e0e0;font-weight:bold;letter-spacing:0.1px;">0</div>
<div class="t" style="left:1671px;top:175.84px;font-size:12px;line-height:12px;color:#d0d0d0;font-weight:bold;letter-spacing:0px;">Y</div>
<div style="left:1682px;top:172px;width:108px;height:18px;background:#2a2a2a;border-radius:3px;border:1px solid #212121;"></div>
<div class="t" style="left:1685px;top:175.84px;font-size:12px;line-height:12px;color:#e0e0e0;font-weight:bold;letter-spacing:0.1px;">0</div>
<div class="t" style="left:1796px;top:175.84px;font-size:12px;line-height:12px;color:#d0d0d0;font-weight:bold;letter-spacing:0px;">Z</div>
<div style="left:1807px;top:172px;width:108px;height:18px;background:#2a2a2a;border-radius:3px;border:1px solid #212121;"></div>
<div class="t" style="left:1810px;top:175.84px;font-size:12px;line-height:12px;color:#e0e0e0;font-weight:bold;letter-spacing:0.1px;">0</div>
<div class="t" style="left:1292px;top:195.84px;font-size:12px;line-height:12px;color:#d8d8d8;font-weight:bold;letter-spacing:0.45px;">Rotation</div>
<div class="t" style="left:1546px;top:195.84px;font-size:12px;line-height:12px;color:#d0d0d0;font-weight:bold;letter-spacing:0px;">X</div>
<div style="left:1558px;top:192px;width:107px;height:18px;background:#2a2a2a;border-radius:3px;border:1px solid #212121;"></div>
<div class="t" style="left:1561px;top:195.84px;font-size:12px;line-height:12px;color:#e0e0e0;font-weight:bold;letter-spacing:0.1px;">0</div>
<div class="t" style="left:1671px;top:195.84px;font-size:12px;line-height:12px;color:#d0d0d0;font-weight:bold;letter-spacing:0px;">Y</div>
<div style="left:1682px;top:192px;width:108px;height:18px;background:#2a2a2a;border-radius:3px;border:1px solid #212121;"></div>
<div class="t" style="left:1685px;top:195.84px;font-size:12px;line-height:12px;color:#e0e0e0;font-weight:bold;letter-spacing:0.1px;">0</div>
<div class="t" style="left:1796px;top:195.84px;font-size:12px;line-height:12px;color:#d0d0d0;font-weight:bold;letter-spacing:0px;">Z</div>
<div style="left:1807px;top:192px;width:108px;height:18px;background:#2a2a2a;border-radius:3px;border:1px solid #212121;"></div>
<div class="t" style="left:1810px;top:195.84px;font-size:12px;line-height:12px;color:#e0e0e0;font-weight:bold;letter-spacing:0.1px;">0</div>
<div class="t" style="left:1292px;top:215.84px;font-size:12px;line-height:12px;color:#d8d8d8;font-weight:bold;letter-spacing:0.45px;">Scale</div>
<div class="t" style="left:1546px;top:215.84px;font-size:12px;line-height:12px;color:#d0d0d0;font-weight:bold;letter-spacing:0px;">X</div>
<div style="left:1558px;top:212px;width:107px;height:18px;background:#2a2a2a;border-radius:3px;border:1px solid #212121;"></div>
<div class="t" style="left:1561px;top:215.84px;font-size:12px;line-height:12px;color:#e0e0e0;font-weight:bold;letter-spacing:0.1px;">100</div>
<div class="t" style="left:1671px;top:215.84px;font-size:12px;line-height:12px;color:#d0d0d0;font-weight:bold;letter-spacing:0px;">Y</div>
<div style="left:1682px;top:212px;width:108px;height:18px;background:#2a2a2a;border-radius:3px;border:1px solid #212121;"></div>
<div class="t" style="left:1685px;top:215.84px;font-size:12px;line-height:12px;color:#e0e0e0;font-weight:bold;letter-spacing:0.1px;">100</div>
<div class="t" style="left:1796px;top:215.84px;font-size:12px;line-height:12px;color:#d0d0d0;font-weight:bold;letter-spacing:0px;">Z</div>
<div style="left:1807px;top:212px;width:108px;height:18px;background:#2a2a2a;border-radius:3px;border:1px solid #212121;"></div>
<div class="t" style="left:1810px;top:215.84px;font-size:12px;line-height:12px;color:#e0e0e0;font-weight:bold;letter-spacing:0.1px;">100</div>
<div style="left:1273px;top:211px;width:2px;height:19px;background:#2f7fc8;"></div>
<div style="left:1273px;top:237px;width:647px;height:1px;background:#232323;"></div>
<div style="left:1273px;top:238px;width:647px;height:20px;background:#3e3e3e;"></div>
<div style="left:1273px;top:258px;width:647px;height:1px;background:#303030;"></div>
<svg style="position:absolute;left:1279px;top:245px;" width="9" height="8" viewBox="0 0 9 8"><path d="M0.5 0.5 H8.5 L4.5 7.5Z" fill="#7d7d7d"/></svg>
<svg style="position:absolute;left:1294px;top:241px;" width="15" height="15" viewBox="0 0 15 15"><g fill="none" stroke="#5cc0f0" stroke-width="1.1"><rect x="1.5" y="1.5" width="12" height="12"/><path d="M5.5 1.5 V13.5 M9.5 1.5 V13.5 M1.5 5.5 H13.5 M1.5 9.5 H13.5"/></g></svg>
<div class="t" style="left:1333px;top:242.84px;font-size:12px;line-height:12px;color:#d2d2d2;font-weight:bold;letter-spacing:0.15px;">Obj 1 (Mesh Filter)</div>
<svg style="position:absolute;left:1861px;top:243px;" width="11" height="11" viewBox="0 0 11 11"><circle cx="5.5" cy="5.5" r="5.5" fill="#c4c4c4"/><path d="M3.6 4.2 A1.9 1.9 0 1 1 5.5 6 V7" fill="none" stroke="#3e3e3e" stroke-width="1.4"/><rect x="4.8" y="8" width="1.4" height="1.4" fill="#3e3e3e"/></svg>
<svg style="position:absolute;left:1880px;top:242px;" width="13" height="12" viewBox="0 0 13 12"><g fill="#c4c4c4"><rect x="2" y="3" width="6" height="1.4"/><rect x="8" y="0.8" width="2.2" height="5"/><rect x="10.2" y="3" width="2.3" height="1.4"/><rect x="2" y="7.8" width="1.3" height="1.4"/><rect x="5" y="6.2" width="2.2" height="5"/><rect x="7.2" y="7.8" width="5.3" height="1.4"/></g></svg>
<svg style="position:absolute;left:1905px;top:243px;" width="4" height="11" viewBox="0 0 4 11"><g fill="#c4c4c4"><rect x="1" y="0" width="2" height="2"/><rect x="1" y="4" width="2" height="2"/><rect x="1" y="8" width="2" height="2"/></g></svg>
<div class="t" style="left:1292px;top:266.84px;font-size:12px;line-height:12px;color:#c4c4c4;font-weight:normal;letter-spacing:0.25px;">Mesh</div>
<div style="left:1545px;top:263px;width:371px;height:18px;background:#2a2a2a;border-radius:3px;border:1px solid #212121;"></div>
<svg style="position:absolute;left:1548px;top:265px;" width="14" height="14" viewBox="0 0 14 14"><g fill="none" stroke="#4a9cc8" stroke-width="1"><rect x="1.5" y="1.5" width="11" height="11"/><path d="M5.2 1.5 V12.5 M8.8 1.5 V12.5 M1.5 5.2 H12.5 M1.5 8.8 H12.5"/></g></svg>
<div class="t" style="left:1561px;top:266.84px;font-size:12px;line-height:12px;color:#d0d0d0;font-weight:normal;letter-spacing:0.1px;">obj1</div>
<div style="left:1897px;top:264px;width:18px;height:16px;background:#2e2e2e;"></div>
<svg style="position:absolute;left:1900px;top:266px;" width="12" height="12" viewBox="0 0 12 12"><circle cx="6" cy="6" r="5" fill="none" stroke="#c4c4c4" stroke-width="1.1"/><circle cx="6" cy="6" r="2" fill="#c4c4c4"/></svg>
<div style="left:1273px;top:288px;width:647px;height:1px;background:#232323;"></div>
<div style="left:1273px;top:289px;width:647px;height:20px;background:#3e3e3e;"></div>
<div style="left:1273px;top:309px;width:647px;height:1px;background:#303030;"></div>
<svg style="position:absolute;left:1280px;top:295px;" width="8" height="9" viewBox="0 0 8 9"><path d="M0.5 0.5 V8.5 L7.5 4.5Z" fill="#7d7d7d"/></svg>
<svg style="position:absolute;left:1294px;top:292px;" width="15" height="15" viewBox="0 0 15 15"><g fill="none" stroke="#5cc0f0" stroke-width="1"><rect x="1.5" y="1.5" width="11" height="10"/><path d="M5 1.5 V11.5 M8.5 1.5 V11.5 M1.5 5 H12.5 M1.5 8.5 H12.5"/></g><ellipse cx="9.5" cy="12" rx="4.5" ry="2.6" fill="#3e3e3e" stroke="#c4c4c4" stroke-width="1.1"/><circle cx="9.5" cy="12" r="1.2" fill="#c4c4c4"/></svg>
<div style="left:1313px;top:292px;width:14px;height:14px;background:#2a2a2a;border-radius:2px;border:1px solid #212121;"></div>
<svg style="position:absolute;left:1315px;top:294px;" width="10" height="10" viewBox="0 0 10 10"><path d="M1.5 5 L4 7.5 L8.5 2" fill="none" stroke="#e0e0e0" stroke-width="1.6"/></svg>
<div class="t" style="left:1333px;top:293.84px;font-size:12px;line-height:12px;color:#d2d2d2;font-weight:bold;letter-spacing:0.15px;">Mesh Renderer</div>
<svg style="position:absolute;left:1861px;top:294px;" width="11" height="11" viewBox="0 0 11 11"><circle cx="5.5" cy="5.5" r="5.5" fill="#c4c4c4"/><path d="M3.6 4.2 A1.9 1.9 0 1 1 5.5 6 V7" fill="none" stroke="#3e3e3e" stroke-width="1.4"/><rect x="4.8" y="8" width="1.4" height="1.4" fill="#3e3e3e"/></svg>
<svg style="position:absolute;left:1880px;top:293px;" width="13" height="12" viewBox="0 0 13 12"><g fill="#c4c4c4"><rect x="2" y="3" width="6" height="1.4"/><rect x="8" y="0.8" width="2.2" height="5"/><rect x="10.2" y="3" width="2.3" height="1.4"/><rect x="2" y="7.8" width="1.3" height="1.4"/><rect x="5" y="6.2" width="2.2" height="5"/><rect x="7.2" y="7.8" width="5.3" height="1.4"/></g></svg>
<svg style="position:absolute;left:1905px;top:294px;" width="4" height="11" viewBox="0 0 4 11"><g fill="#c4c4c4"><rect x="1" y="0" width="2" height="2"/><rect x="1" y="4" width="2" height="2"/><rect x="1" y="8" width="2" height="2"/></g></svg>
<div style="left:1273px;top:311px;width:647px;height:53px;background:#3e3e3e;"></div>
<div style="left:1273px;top:364px;width:647px;height:1px;background:#2a2a2a;"></div>
<svg style="position:absolute;left:1289px;top:316px" width="32" height="32" viewBox="0 0 32 32"><defs><radialGradient id="mat" cx="0.5" cy="0.75" r="0.8"><stop offset="0" stop-color="#d4ecf7"/><stop offset="0.6" stop-color="#9fd1f1"/><stop offset="1" stop-color="#6ab4ea"/></radialGradient></defs><circle cx="16" cy="16" r="15" fill="url(#mat)"/></svg>
<svg style="position:absolute;left:1279px;top:350px;" width="9" height="8" viewBox="0 0 9 8"><path d="M0.5 0.5 H8.5 L4.5 7.5Z" fill="#7d7d7d"/></svg>
<div class="t" style="left:1329px;top:318.84px;font-size:12px;line-height:12px;color:#b8b8b8;font-weight:normal;letter-spacing:0.25px;">Skybox</div>
<svg style="position:absolute;left:1874px;top:317px;" width="11" height="11" viewBox="0 0 11 11"><circle cx="5.5" cy="5.5" r="5.5" fill="#c4c4c4"/><path d="M3.6 4.2 A1.9 1.9 0 1 1 5.5 6 V7" fill="none" stroke="#3e3e3e" stroke-width="1.4"/><rect x="4.8" y="8" width="1.4" height="1.4" fill="#3e3e3e"/></svg>
<svg style="position:absolute;left:1890px;top:317px;" width="13" height="12" viewBox="0 0 13 12"><g fill="#c4c4c4"><rect x="2" y="3" width="6" height="1.4"/><rect x="8" y="0.8" width="2.2" height="5"/><rect x="10.2" y="3" width="2.3" height="1.4"/><rect x="2" y="7.8" width="1.3" height="1.4"/><rect x="5" y="6.2" width="2.2" height="5"/><rect x="7.2" y="7.8" width="5.3" height="1.4"/></g></svg>
<svg style="position:absolute;left:1905px;top:316px;" width="13" height="13" viewBox="0 0 13 13"><g fill="#c4c4c4"><circle cx="6.5" cy="6.5" r="4"/><rect x="5.3" y="0.5" width="2.4" height="12"/><rect x="0.5" y="5.3" width="12" height="2.4"/><rect x="5.3" y="0.5" width="2.4" height="12" transform="rotate(45 6.5 6.5)"/><rect x="5.3" y="0.5" width="2.4" height="12" transform="rotate(-45 6.5 6.5)"/></g><circle cx="6.5" cy="6.5" r="1.8" fill="#3e3e3e"/></svg>
<div class="t" style="left:1326px;top:341.34px;font-size:12px;line-height:12px;color:#c4c4c4;font-weight:normal;letter-spacing:0.25px;">Shader</div>
<div style="left:1378px;top:339px;width:537px;height:16px;background:#515151;border-radius:3px;border-bottom:1px solid #242424;"></div>
<div class="t" style="left:1382px;top:341.34px;font-size:12px;line-height:12px;color:#d0d0d0;font-weight:normal;letter-spacing:0.25px;">Unlit/Texture</div>
<svg style="position:absolute;left:1902px;top:345px;" width="8" height="5" viewBox="0 0 8 5"><path d="M0 0 H8 L4.0 5Z" fill="#c4c4c4"/></svg>
<div class="t" style="left:1292px;top:375.84px;font-size:12px;line-height:12px;color:#c4c4c4;font-weight:normal;letter-spacing:0.25px;">Base (RGB)</div>
<div class="t" style="left:1307px;top:403.84px;font-size:12px;line-height:12px;color:#c4c4c4;font-weight:normal;letter-spacing:0.25px;">Tiling</div>
<div class="t" style="left:1307px;top:423.84px;font-size:12px;line-height:12px;color:#c4c4c4;font-weight:normal;letter-spacing:0.25px;">Offset</div>
<div class="t" style="left:1372px;top:403.84px;font-size:12px;line-height:12px;color:#c4c4c4;font-weight:normal;letter-spacing:0px;">X</div>
<div style="left:1384px;top:401px;width:224px;height:17px;background:#2a2a2a;border-radius:3px;border:1px solid #212121;"></div>
<div class="t" style="left:1387px;top:403.84px;font-size:12px;line-height:12px;color:#d0d0d0;font-weight:normal;letter-spacing:0.25px;">1</div>
<div class="t" style="left:1613px;top:403.84px;font-size:12px;line-height:12px;color:#c4c4c4;font-weight:normal;letter-spacing:0px;">Y</div>
<div style="left:1624px;top:401px;width:225px;height:17px;background:#2a2a2a;border-radius:3px;border:1px solid #212121;"></div>
<div class="t" style="left:1627px;top:403.84px;font-size:12px;line-height:12px;color:#d0d0d0;font-weight:normal;letter-spacing:0.25px;">1</div>
<div class="t" style="left:1372px;top:423.84px;font-size:12px;line-height:12px;color:#c4c4c4;font-weight:normal;letter-spacing:0px;">X</div>
<div style="left:1384px;top:421px;width:224px;height:17px;background:#2a2a2a;border-radius:3px;border:1px solid #212121;"></div>
<div class="t" style="left:1387px;top:423.84px;font-size:12px;line-height:12px;color:#d0d0d0;font-weight:normal;letter-spacing:0.25px;">0</div>
<div class="t" style="left:1613px;top:423.84px;font-size:12px;line-height:12px;color:#c4c4c4;font-weight:normal;letter-spacing:0px;">Y</div>
<div style="left:1624px;top:421px;width:225px;height:17px;background:#2a2a2a;border-radius:3px;border:1px solid #212121;"></div>
<div class="t" style="left:1627px;top:423.84px;font-size:12px;line-height:12px;color:#d0d0d0;font-weight:normal;letter-spacing:0.25px;">0</div>
<div style="left:1852px;top:372px;width:64px;height:64px;background:#1c2228;border-radius:2px;"></div>
<div style="left:1854px;top:374px;width:60px;height:60px;background:linear-gradient(180deg,#6ab6ea 0%,#8cc8ef 45%,#b6def3 80%,#cfe9f6 100%);"></div>
<div style="left:1879px;top:423px;width:36px;height:12px;background:#3a3a3a;"></div>
<div class="t" style="left:1883px;top:424.11px;font-size:10.5px;line-height:10.5px;color:#c4c4c4;font-weight:normal;letter-spacing:0px;">Select</div>
<div class="t" style="left:1292px;top:461.84px;font-size:12px;line-height:12px;color:#c4c4c4;font-weight:normal;letter-spacing:0.25px;">Render Queue</div>
<div style="left:1752px;top:459px;width:97px;height:16px;background:#515151;border-radius:3px;border-bottom:1px solid #242424;"></div>
<div class="t" style="left:1756px;top:461.34px;font-size:12px;line-height:12px;color:#d0d0d0;font-weight:normal;letter-spacing:0.25px;">From Shader</div>
<svg style="position:absolute;left:1836px;top:465px;" width="8" height="5" viewBox="0 0 8 5"><path d="M0 0 H8 L4.0 5Z" fill="#c4c4c4"/></svg>
<div style="left:1853px;top:458px;width:63px;height:17px;background:#2a2a2a;border-radius:3px;border:1px solid #212121;"></div>
<div class="t" style="left:1855px;top:461.84px;font-size:12px;line-height:12px;color:#d0d0d0;font-weight:normal;letter-spacing:0.3px;">2000</div>
<div class="t" style="left:1292px;top:483.84px;font-size:12px;line-height:12px;color:#c4c4c4;font-weight:normal;letter-spacing:0.2px;">Double Sided Global Illumination</div>
<div style="left:1851px;top:483px;width:14px;height:14px;background:#2a2a2a;border-radius:2px;border:1px solid #212121;"></div>
<div style="left:1273px;top:506px;width:647px;height:1px;background:#2a2a2a;"></div>
<div style="left:1483px;top:517px;width:228px;height:23px;background:#585858;border-radius:3px;border-bottom:1px solid #242424;"></div>
<div class="t" style="left:1297px;width:600px;text-align:center;top:521.84px;font-size:12px;line-height:12px;color:#d8d8d8;font-weight:normal;letter-spacing:0.2px;">Add Component</div>
<div style="left:0px;top:639px;width:1271px;height:19px;background:#282828;"></div>
<div style="left:0px;top:639px;width:80px;height:19px;background:#3c3c3c;border-radius:2px 2px 0 0;"></div>
<svg style="position:absolute;left:7px;top:644px;" width="12" height="10" viewBox="0 0 12 10"><path d="M0 0.5 H4.5 L5.5 1.8 H12 V10 H0Z" fill="#c4c4c4"/></svg>
<div class="t" style="left:23px;top:643.84px;font-size:12px;line-height:12px;color:#c4c4c4;font-weight:normal;letter-spacing:0.25px;">Project</div>
<svg style="position:absolute;left:90px;top:643px;" width="10" height="12" viewBox="0 0 10 12"><rect x="0.5" y="0.5" width="9" height="11" fill="#c4c4c4"/><g fill="#282828"><rect x="2" y="3" width="6" height="1"/><rect x="2" y="5" width="6" height="1"/><rect x="2" y="7" width="6" height="1"/><rect x="2" y="9" width="4" height="1"/></g></svg>
<div class="t" style="left:105px;top:643.84px;font-size:12px;line-height:12px;color:#c4c4c4;font-weight:normal;letter-spacing:0.25px;">Console</div>
<svg style="position:absolute;left:177px;top:643px;" width="12" height="11" viewBox="0 0 12 11"><g fill="#c4c4c4"><rect x="1.5" y="0" width="1.2" height="11"/><rect x="5.5" y="0" width="1.2" height="11"/><rect x="9.5" y="0" width="1.2" height="11"/><rect x="0.5" y="6" width="3.2" height="2"/><rect x="4.5" y="2" width="3.2" height="2"/><rect x="8.5" y="4" width="3.2" height="2"/></g></svg>
<div class="t" style="left:193px;top:643.84px;font-size:12px;line-height:12px;color:#c4c4c4;font-weight:normal;letter-spacing:0.25px;">Audio Mixer</div>
<svg style="position:absolute;left:1236px;top:641px;" width="11" height="12" viewBox="0 0 11 12"><g fill="none" stroke="#c4c4c4" stroke-width="1.1"><rect x="2" y="7" width="7" height="4.2" rx="0.6"/><path d="M3.5 5 A2.4 2.4 0 0 1 8 4.5 V7"/></g></svg>
<svg style="position:absolute;left:1256px;top:643px;" width="4" height="11" viewBox="0 0 4 11"><g fill="#c4c4c4"><rect x="1" y="0" width="2" height="2"/><rect x="1" y="4" width="2" height="2"/><rect x="1" y="8" width="2" height="2"/></g></svg>
<div style="left:0px;top:658px;width:1271px;height:20px;background:#3c3c3c;"></div>
<svg style="position:absolute;left:7px;top:662px;" width="13" height="13" viewBox="0 0 13 13"><g fill="#c4c4c4"><rect x="5.5" y="0" width="2" height="13"/><rect x="0" y="5.5" width="13" height="2"/></g></svg>
<svg style="position:absolute;left:23px;top:667px;" width="8" height="5" viewBox="0 0 8 5"><path d="M0 0 H8 L4.0 5Z" fill="#c4c4c4"/></svg>
<div style="left:857px;top:660px;width:300px;height:16px;background:#2a2a2a;border-radius:4px;border:1px solid #212121;"></div>
<svg style="position:absolute;left:862px;top:663px;" width="10" height="10" viewBox="0 0 10 10"><g fill="none" stroke="#c4c4c4" stroke-width="1.3"><circle cx="3.8" cy="3.8" r="2.6"/><path d="M5.6 5.8 L8 8.5"/></g></svg>
<div style="left:1159px;top:658px;width:1px;height:20px;background:#2b2b2b;"></div>
<div style="left:1185px;top:658px;width:1px;height:20px;background:#2b2b2b;"></div>
<div style="left:1211px;top:658px;width:1px;height:20px;background:#2b2b2b;"></div>
<div style="left:1237px;top:658px;width:1px;height:20px;background:#2b2b2b;"></div>
<svg style="position:absolute;left:1165px;top:661px;" width="14" height="14" viewBox="0 0 14 14"><circle cx="4" cy="10" r="3.2" fill="#c4c4c4"/><rect x="1" y="1" width="5.5" height="5.5" fill="#c4c4c4"/><path d="M8 6.5 L10.5 1.5 L13 6.5Z" fill="#c4c4c4"/></svg>
<svg style="position:absolute;left:1191px;top:661px;" width="14" height="14" viewBox="0 0 14 14"><path d="M7 1 H12.5 V6.5 L6 13 L1 8Z" fill="#c4c4c4"/><circle cx="10" cy="3.8" r="1.1" fill="#3c3c3c"/></svg>
<svg style="position:absolute;left:1217px;top:661px;" width="14" height="14" viewBox="0 0 14 14"><path d="M7 1 L8.8 5 L13 5.3 L9.8 8.2 L10.8 12.5 L7 10.2 L3.2 12.5 L4.2 8.2 L1 5.3 L5.2 5Z" fill="#8a8a8a"/></svg>
<svg style="position:absolute;left:1243px;top:662px;" width="15" height="12" viewBox="0 0 15 12"><g fill="none" stroke="#a8a8a8" stroke-width="1.1"><path d="M1 6 Q7.5 0 14 6 Q7.5 12 1 6Z"/><circle cx="7.5" cy="6" r="2"/><path d="M2 11 L13 1"/></g></svg>
<div class="t" style="left:1258px;top:663.84px;font-size:12px;line-height:12px;color:#a8a8a8;font-weight:normal;letter-spacing:0px;">8</div>
<div style="left:0px;top:678px;width:1271px;height:1px;background:#232323;"></div>
<div style="left:0px;top:679px;width:530px;height:307px;background:#383838;"></div>
<div style="left:530px;top:679px;width:12px;height:307px;background:#2f2f2f;"></div>
<div style="left:531px;top:710px;width:10px;height:180px;background:#5a5a5a;border-radius:5px;"></div>
<svg style="position:absolute;left:532px;top:684px;" width="8" height="5" viewBox="0 0 8 5"><path d="M0 5 H8 L4 0Z" fill="#c4c4c4"/></svg>
<svg style="position:absolute;left:532px;top:975px;" width="8" height="5" viewBox="0 0 8 5"><path d="M0 0 H8 L4 5Z" fill="#c4c4c4"/></svg>
<div style="left:542px;top:679px;width:1px;height:307px;background:#232323;"></div>
<svg style="position:absolute;left:32px;top:684px;" width="13" height="13" viewBox="0 0 13 13"><g fill="none" stroke="#c4c4c4" stroke-width="1.2"><circle cx="5" cy="5" r="4"/><path d="M8 8 L12 12" stroke-width="1.8"/></g></svg>
<div class="t" style="left:48px;top:684.84px;font-size:12px;line-height:12px;color:#c4c4c4;font-weight:normal;letter-spacing:0.25px;">All Models</div>
<svg style="position:absolute;left:32px;top:700px;" width="13" height="13" viewBox="0 0 13 13"><g fill="none" stroke="#c4c4c4" stroke-width="1.2"><circle cx="5" cy="5" r="4"/><path d="M8 8 L12 12" stroke-width="1.8"/></g></svg>
<div class="t" style="left:48px;top:700.84px;font-size:12px;line-height:12px;color:#c4c4c4;font-weight:normal;letter-spacing:0.25px;">All Prefabs</div>
<div style="left:0px;top:970px;width:530px;height:16px;background:#4d4d4d;"></div>
<svg style="position:absolute;left:4px;top:734px;" width="9" height="8" viewBox="0 0 9 8"><path d="M0.5 0.5 H8.5 L4.5 7.5Z" fill="#7d7d7d"/></svg>
<svg style="position:absolute;left:18px;top:732px;" width="15" height="12" viewBox="0 0 15 12"><path d="M0.5 1 H5 L6.5 2.5 H12 V4.5 H3 L0.5 11.5Z" fill="#c4c4c4"/><path d="M3.5 5.5 H14.5 L12 11.5 H1Z" fill="#c4c4c4"/><path d="M0.5 1 V11.5" stroke="#c4c4c4"/></svg>
<div class="t" style="left:34px;top:732.34px;font-size:12px;line-height:12px;color:#d2d2d2;font-weight:bold;letter-spacing:0.1px;">Assets</div>
<svg style="position:absolute;left:19px;top:750px;" width="8" height="9" viewBox="0 0 8 9"><path d="M0.5 0.5 V8.5 L7.5 4.5Z" fill="#7d7d7d"/></svg>
<svg style="position:absolute;left:32px;top:748px;" width="14" height="12" viewBox="0 0 14 12"><path d="M0.5 1 H5 L6.5 2.5 H13.5 V11.5 H0.5Z" fill="#c4c4c4"/></svg>
<div class="t" style="left:48px;top:748.34px;font-size:12px;line-height:12px;color:#c4c4c4;font-weight:normal;letter-spacing:0.25px;">activity</div>
<svg style="position:absolute;left:19px;top:766px;" width="8" height="9" viewBox="0 0 8 9"><path d="M0.5 0.5 V8.5 L7.5 4.5Z" fill="#7d7d7d"/></svg>
<svg style="position:absolute;left:32px;top:764px;" width="14" height="12" viewBox="0 0 14 12"><path d="M0.5 1 H5 L6.5 2.5 H13.5 V11.5 H0.5Z" fill="#c4c4c4"/></svg>
<div class="t" style="left:48px;top:764.34px;font-size:12px;line-height:12px;color:#c4c4c4;font-weight:normal;letter-spacing:0.25px;">escalator</div>
<svg style="position:absolute;left:32px;top:780px;" width="14" height="12" viewBox="0 0 14 12"><path d="M0.5 1 H5 L6.5 2.5 H13.5 V11.5 H0.5Z" fill="#c4c4c4"/></svg>
<div class="t" style="left:48px;top:780.34px;font-size:12px;line-height:12px;color:#c4c4c4;font-weight:normal;letter-spacing:0.25px;">Materials</div>
<svg style="position:absolute;left:18px;top:798px;" width="9" height="8" viewBox="0 0 9 8"><path d="M0.5 0.5 H8.5 L4.5 7.5Z" fill="#7d7d7d"/></svg>
<svg style="position:absolute;left:32px;top:796px;" width="15" height="12" viewBox="0 0 15 12"><path d="M0.5 1 H5 L6.5 2.5 H12 V4.5 H3 L0.5 11.5Z" fill="#c4c4c4"/><path d="M3.5 5.5 H14.5 L12 11.5 H1Z" fill="#c4c4c4"/><path d="M0.5 1 V11.5" stroke="#c4c4c4"/></svg>
<div class="t" style="left:48px;top:796.34px;font-size:12px;line-height:12px;color:#c4c4c4;font-weight:normal;letter-spacing:0.25px;">NPC</div>
<svg style="position:absolute;left:46px;top:812px;" width="14" height="12" viewBox="0 0 14 12"><path d="M1 1.5 H5 L6.5 3 H13 V11 H1Z" fill="none" stroke="#c4c4c4" stroke-width="1.1"/></svg>
<div class="t" style="left:62px;top:812.34px;font-size:12px;line-height:12px;color:#c4c4c4;font-weight:normal;letter-spacing:0.25px;">tex</div>
<svg style="position:absolute;left:46px;top:828px;" width="14" height="12" viewBox="0 0 14 12"><path d="M1 1.5 H5 L6.5 3 H13 V11 H1Z" fill="none" stroke="#c4c4c4" stroke-width="1.1"/></svg>
<div class="t" style="left:62px;top:828.34px;font-size:12px;line-height:12px;color:#c4c4c4;font-weight:normal;letter-spacing:0.25px;">tex_sample</div>
<svg style="position:absolute;left:18px;top:846px;" width="9" height="8" viewBox="0 0 9 8"><path d="M0.5 0.5 H8.5 L4.5 7.5Z" fill="#7d7d7d"/></svg>
<svg style="position:absolute;left:32px;top:844px;" width="15" height="12" viewBox="0 0 15 12"><path d="M0.5 1 H5 L6.5 2.5 H12 V4.5 H3 L0.5 11.5Z" fill="#c4c4c4"/><path d="M3.5 5.5 H14.5 L12 11.5 H1Z" fill="#c4c4c4"/><path d="M0.5 1 V11.5" stroke="#c4c4c4"/></svg>
<div class="t" style="left:48px;top:844.34px;font-size:12px;line-height:12px;color:#c4c4c4;font-weight:normal;letter-spacing:0.25px;">Samples</div>
<svg style="position:absolute;left:32px;top:862px;" width="9" height="8" viewBox="0 0 9 8"><path d="M0.5 0.5 H8.5 L4.5 7.5Z" fill="#7d7d7d"/></svg>
<svg style="position:absolute;left:46px;top:860px;" width="15" height="12" viewBox="0 0 15 12"><path d="M0.5 1 H5 L6.5 2.5 H12 V4.5 H3 L0.5 11.5Z" fill="#c4c4c4"/><path d="M3.5 5.5 H14.5 L12 11.5 H1Z" fill="#c4c4c4"/><path d="M0.5 1 V11.5" stroke="#c4c4c4"/></svg>
<div class="t" style="left:62px;top:860.34px;font-size:12px;line-height:12px;color:#c4c4c4;font-weight:normal;letter-spacing:0.25px;">Vket Cloud SDK</div>
<svg style="position:absolute;left:46px;top:878px;" width="9" height="8" viewBox="0 0 9 8"><path d="M0.5 0.5 H8.5 L4.5 7.5Z" fill="#7d7d7d"/></svg>
<svg style="position:absolute;left:60px;top:876px;" width="15" height="12" viewBox="0 0 15 12"><path d="M0.5 1 H5 L6.5 2.5 H12 V4.5 H3 L0.5 11.5Z" fill="#c4c4c4"/><path d="M3.5 5.5 H14.5 L12 11.5 H1Z" fill="#c4c4c4"/><path d="M0.5 1 V11.5" stroke="#c4c4c4"/></svg>
<div class="t" style="left:76px;top:876.34px;font-size:12px;line-height:12px;color:#c4c4c4;font-weight:normal;letter-spacing:0.25px;">9.11.1</div>
<svg style="position:absolute;left:60px;top:894px;" width="9" height="8" viewBox="0 0 9 8"><path d="M0.5 0.5 H8.5 L4.5 7.5Z" fill="#7d7d7d"/></svg>
<svg style="position:absolute;left:74px;top:892px;" width="15" height="12" viewBox="0 0 15 12"><path d="M0.5 1 H5 L6.5 2.5 H12 V4.5 H3 L0.5 11.5Z" fill="#c4c4c4"/><path d="M3.5 5.5 H14.5 L12 11.5 H1Z" fill="#c4c4c4"/><path d="M0.5 1 V11.5" stroke="#c4c4c4"/></svg>
<div class="t" style="left:90px;top:892.34px;font-size:12px;line-height:12px;color:#c4c4c4;font-weight:normal;letter-spacing:0.25px;">Tutorial -basic-</div>
<svg style="position:absolute;left:74px;top:910px;" width="9" height="8" viewBox="0 0 9 8"><path d="M0.5 0.5 H8.5 L4.5 7.5Z" fill="#7d7d7d"/></svg>
<svg style="position:absolute;left:88px;top:908px;" width="15" height="12" viewBox="0 0 15 12"><path d="M0.5 1 H5 L6.5 2.5 H12 V4.5 H3 L0.5 11.5Z" fill="#c4c4c4"/><path d="M3.5 5.5 H14.5 L12 11.5 H1Z" fill="#c4c4c4"/><path d="M0.5 1 V11.5" stroke="#c4c4c4"/></svg>
<div class="t" style="left:104px;top:908.34px;font-size:12px;line-height:12px;color:#c4c4c4;font-weight:normal;letter-spacing:0.25px;">Used Files</div>
<svg style="position:absolute;left:102px;top:924px;" width="14" height="12" viewBox="0 0 14 12"><path d="M0.5 1 H5 L6.5 2.5 H13.5 V11.5 H0.5Z" fill="#c4c4c4"/></svg>
<div class="t" style="left:118px;top:924.34px;font-size:12px;line-height:12px;color:#c4c4c4;font-weight:normal;letter-spacing:0.25px;">Audio</div>
<svg style="position:absolute;left:102px;top:940px;" width="14" height="12" viewBox="0 0 14 12"><path d="M0.5 1 H5 L6.5 2.5 H13.5 V11.5 H0.5Z" fill="#c4c4c4"/></svg>
<div class="t" style="left:118px;top:940.34px;font-size:12px;line-height:12px;color:#c4c4c4;font-weight:normal;letter-spacing:0.25px;">Images</div>
<svg style="position:absolute;left:102px;top:956px;" width="14" height="12" viewBox="0 0 14 12"><path d="M0.5 1 H5 L6.5 2.5 H13.5 V11.5 H0.5Z" fill="#c4c4c4"/></svg>
<div class="t" style="left:118px;top:956.34px;font-size:12px;line-height:12px;color:#c4c4c4;font-weight:normal;letter-spacing:0.25px;">Materials</div>
<svg style="position:absolute;left:102px;top:972px;" width="14" height="12" viewBox="0 0 14 12"><path d="M0.5 1 H5 L6.5 2.5 H13.5 V11.5 H0.5Z" fill="#c4c4c4"/></svg>
<div class="t" style="left:118px;top:972.34px;font-size:12px;line-height:12px;color:#c4c4c4;font-weight:normal;letter-spacing:0.25px;">Models</div>
<div style="left:543px;top:679px;width:728px;height:20px;background:#3e3e3e;"></div>
<div style="left:543px;top:699px;width:728px;height:1px;background:#2a2a2a;"></div>
<div class="t" style="left:547px;top:682.84px;font-size:12px;line-height:12px;color:#c4c4c4;font-weight:normal;letter-spacing:0.25px;">Assets</div>
<div class="t" style="left:602px;top:682.84px;font-size:12px;line-height:12px;color:#c4c4c4;font-weight:normal;letter-spacing:0.25px;">Samples</div>
<div class="t" style="left:669px;top:682.84px;font-size:12px;line-height:12px;color:#c4c4c4;font-weight:normal;letter-spacing:0.25px;">Vket Cloud SDK</div>
<div class="t" style="left:776px;top:682.84px;font-size:12px;line-height:12px;color:#c4c4c4;font-weight:normal;letter-spacing:0.25px;">9.11.1</div>
<div class="t" style="left:825px;top:682.84px;font-size:12px;line-height:12px;color:#c4c4c4;font-weight:normal;letter-spacing:0.25px;">Tutorial -basic-</div>
<div class="t" style="left:931px;top:682.84px;font-size:12px;line-height:12px;color:#c4c4c4;font-weight:normal;letter-spacing:0.25px;">Used Files</div>
<div class="t" style="left:1007px;top:682.84px;font-size:12px;line-height:12px;color:#d8d8d8;font-weight:bold;letter-spacing:0.25px;">Models</div>
<svg style="position:absolute;left:591px;top:684px;" width="6" height="10" viewBox="0 0 6 10"><path d="M1 1 L5 5 L1 9" fill="none" stroke="#9a9a9a" stroke-width="1.2"/></svg>
<svg style="position:absolute;left:657px;top:684px;" width="6" height="10" viewBox="0 0 6 10"><path d="M1 1 L5 5 L1 9" fill="none" stroke="#9a9a9a" stroke-width="1.2"/></svg>
<svg style="position:absolute;left:764px;top:684px;" width="6" height="10" viewBox="0 0 6 10"><path d="M1 1 L5 5 L1 9" fill="none" stroke="#9a9a9a" stroke-width="1.2"/></svg>
<svg style="position:absolute;left:813px;top:684px;" width="6" height="10" viewBox="0 0 6 10"><path d="M1 1 L5 5 L1 9" fill="none" stroke="#9a9a9a" stroke-width="1.2"/></svg>
<svg style="position:absolute;left:918px;top:684px;" width="6" height="10" viewBox="0 0 6 10"><path d="M1 1 L5 5 L1 9" fill="none" stroke="#9a9a9a" stroke-width="1.2"/></svg>
<svg style="position:absolute;left:995px;top:684px;" width="6" height="10" viewBox="0 0 6 10"><path d="M1 1 L5 5 L1 9" fill="none" stroke="#9a9a9a" stroke-width="1.2"/></svg>
<svg style="position:absolute;left:1058px;top:684px;" width="6" height="10" viewBox="0 0 6 10"><path d="M1 1 L5 5 L1 9" fill="none" stroke="#9a9a9a" stroke-width="1.2"/></svg>
<div style="left:543px;top:700px;width:728px;height:265px;background:#333333;"></div>
<div style="left:560px;top:712px;width:92px;height:92px;background:#505050;"></div>
<svg style="position:absolute;left:578px;top:730px" width="56" height="56" viewBox="0 0 56 56"><defs><radialGradient id="thumb" cx="0.5" cy="0.95" r="0.9"><stop offset="0" stop-color="#e0f1f7"/><stop offset="0.55" stop-color="#9fd2f0"/><stop offset="1" stop-color="#5fb0e8"/></radialGradient></defs><circle cx="28" cy="28" r="26.5" fill="url(#thumb)"/></svg>
<svg style="position:absolute;left:640px;top:743px" width="28" height="28" viewBox="0 0 28 28"><circle cx="14" cy="14" r="11.5" fill="#000" fill-opacity="0.35"/><circle cx="14" cy="13.5" r="11" fill="#c8c8c8"/><path d="M11 8.5 L18.5 13.5 L11 18.5Z" fill="#2a2a2a"/></svg>
<div class="t" style="left:306px;width:600px;text-align:center;top:809.11px;font-size:10.5px;line-height:10.5px;color:#c4c4c4;font-weight:normal;letter-spacing:0.1px;">Sky_Sphere</div>
<div style="left:543px;top:965px;width:728px;height:1px;background:#232323;"></div>
<div style="left:543px;top:966px;width:728px;height:20px;background:#3e3e3e;"></div>
<div style="left:1200px;top:975px;width:44px;height:2px;background:#656565;"></div>
<div style="left:1245px;top:971px;width:10px;height:10px;border-radius:5px;background:#b8b8b8;"></div>
</body></html>
